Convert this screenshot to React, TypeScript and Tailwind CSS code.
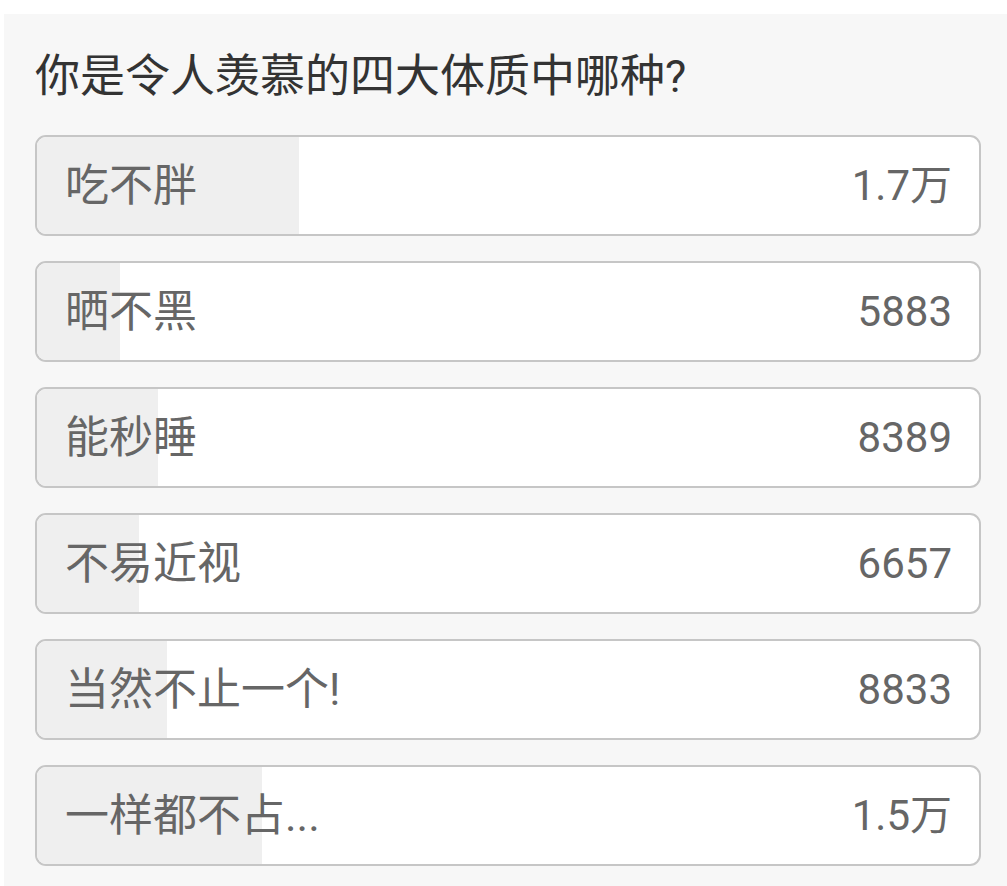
const options = [
  { label: '吃不胖', count: '1.7万', fill: 262 },
  { label: '晒不黑', count: '5883', fill: 83 },
  { label: '能秒睡', count: '8389', fill: 121 },
  { label: '不易近视', count: '6657', fill: 102 },
  { label: '当然不止一个!', count: '8833', fill: 130 },
  { label: '一样都不占...', count: '1.5万', fill: 225 },
];

function OptionRow({ label, count, fill }: { label: string; count: string; fill: number }) {
  return (
    <div className="relative flex h-[101px] items-center justify-between overflow-hidden rounded-[11px] border-2 border-[#c6c6c6] bg-white pl-[28px] pr-[27px]">
      <div className="absolute inset-y-0 left-0 bg-[#efefef]" style={{ width: fill }} />
      <span className="relative text-[44px] leading-none text-[#666666]">{label}</span>
      <span className="relative text-[42px] leading-none text-[#666666]">{count}</span>
    </div>
  );
}

export default function App() {
  return (
    <div className="min-h-screen bg-white pl-[4px] pt-[14px]">
      <div
        className="h-[872px] bg-[#f7f7f7] pl-[31px] pr-[26px] pt-[39px]"
        style={{ fontFamily: 'Roboto, "Noto Sans CJK SC", sans-serif' }}
      >
        <h1 className="text-[45px] leading-[48px] text-[#333333]">你是令人羡慕的四大体质中哪种?</h1>
        <div className="mt-[34px] flex flex-col gap-[25px]">
          {options.map((o) => (
            <OptionRow key={o.label} {...o} />
          ))}
        </div>
      </div>
    </div>
  );
}
